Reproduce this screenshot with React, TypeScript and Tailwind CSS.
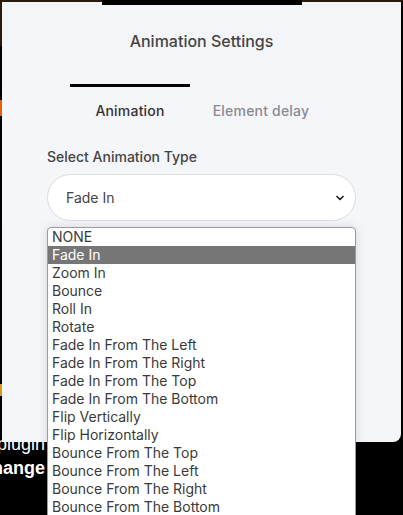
import { ChevronDown } from "lucide-react";

const OPTIONS = [
  "NONE",
  "Fade In",
  "Zoom In",
  "Bounce",
  "Roll In",
  "Rotate",
  "Fade In From The Left",
  "Fade In From The Right",
  "Fade In From The Top",
  "Fade In From The Bottom",
  "Flip Vertically",
  "Flip Horizontally",
  "Bounce From The Top",
  "Bounce From The Left",
  "Bounce From The Right",
  "Bounce From The Bottom",
  "Zoom Out",
];

export default function App() {
  const selected = "Fade In";

  return (
    <div className="relative w-[403px] h-[515px] overflow-hidden bg-black font-['Inter',sans-serif]">
      {/* page behind the dialog */}
      <div className="h-[2px] bg-[#2a1a0c]" />
      <div className="absolute left-0 top-0 w-[2px] h-[46px] bg-[#2a1a0c]" />
      <div className="absolute left-0 top-[100px] w-[2px] h-[16px] bg-[#e8600a]" />
      <div className="absolute left-0 top-[384px] w-[2px] h-[12px] bg-[#d99a1a]" />
      <div className="absolute right-[358px] top-[432px] flex flex-col items-end text-white font-['Liberation_Sans',sans-serif] text-[18px] leading-[24px]">
        <span>plugin</span>
        <span className="font-bold">change</span>
      </div>

      {/* dialog */}
      <div className="absolute left-[2px] top-[2px] w-[399px] h-[440px] bg-[#f4f5f9] rounded-br-[8px]">
        <div className="absolute left-[100px] top-[-2px] w-[200px] h-[5px] bg-black" />
        <div className="pt-[29px] text-center text-[16px] leading-[20px] font-medium text-[#444]">
          Animation Settings
        </div>

        <div className="mt-[33px] bg-[#f5f6fa] rounded-t-[10px]">
          <div className="flex justify-center pr-[12px]">
            <div className="w-[131px] flex flex-col items-center">
              <div className="w-[120px] h-[3px] bg-black" />
              <span className="mt-[15px] text-[14px] leading-[18px] font-medium tracking-[0.2px] text-[#333]">Animation</span>
            </div>
            <div className="w-[131px] flex flex-col items-center">
              <div className="w-[120px] h-[3px]" />
              <span className="mt-[15px] text-[14px] leading-[18px] font-medium tracking-[0.2px] text-[#8a8a92]">Element delay</span>
            </div>
          </div>

          <div className="px-[45px] pt-[28px]">
            <div className="text-[14px] leading-[18px] font-medium text-[#444]">Select Animation Type</div>
            <div className="mt-[8px] h-[47px] w-[309px] rounded-full bg-white border border-[#dcdce0] flex items-center justify-between pl-[18px] pr-[9px]">
              <span className="text-[14px] text-[#444]">{selected}</span>
              <ChevronDown className="w-[12px] h-[12px] text-[#222]" strokeWidth={3.5} />
            </div>
          </div>
        </div>
      </div>

      {/* native select popup */}
      <div className="absolute left-[47px] top-[227px] w-[309px] h-[300px] bg-white border border-[#9a9a9a] rounded-t-[4px] shadow-[0_0_10px_rgba(0,0,0,0.12)] overflow-hidden font-['Inter',sans-serif] text-[14px] leading-[18px] text-[#3a3a3a]">
        {OPTIONS.map((o) => (
          <div
            key={o}
            className={o === selected ? "h-[18px] pl-[4px] bg-[#767676] text-white" : "h-[18px] pl-[4px]"}
          >
            {o}
          </div>
        ))}
      </div>
    </div>
  );
}
